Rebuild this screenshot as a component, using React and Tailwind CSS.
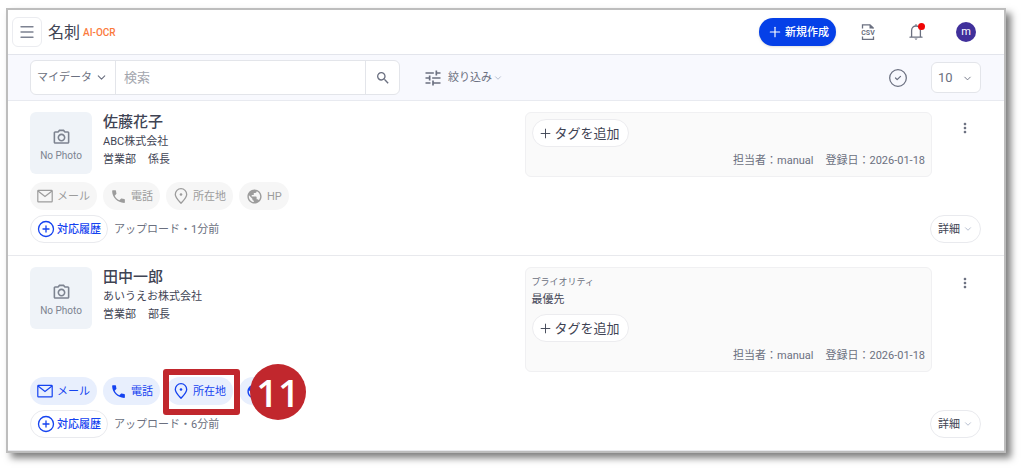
import React from "react";
import { ChevronDown, CircleCheck, CirclePlus, Menu, Plus } from "lucide-react";
import { MdMoreVert, MdOutlinePhotoCamera, MdPhone, MdPublic, MdSearch, MdTune } from "react-icons/md";

const cards = [
   {
      id: 1,
      name: "佐藤花子",
      company: "ABC株式会社",
      department: "営業部",
      title: "係長",
      uploaded: "アップロード・1分前",
      owner: "manual",
      registered: "2026-01-18",
      active: false,
   },
   {
      id: 2,
      name: "田中一郎",
      company: "あいうえお株式会社",
      department: "営業部",
      title: "部長",
      priority: "最優先",
      uploaded: "アップロード・6分前",
      owner: "manual",
      registered: "2026-01-18",
      active: true,
      step: 11,
   },
];

function MailIcon() {
   return (
      <svg viewBox="0 0 16 16" className="w-4 h-4" fill="none" stroke="currentColor" strokeWidth="1.2">
         <rect x="0.8" y="2.4" width="14.4" height="11.4" rx="0.6" />
         <path d="M1 3l7 5.4L15 3" />
      </svg>
   );
}

function PinIcon() {
   return (
      <svg viewBox="0 0 16 16" className="w-4 h-4" fill="none" stroke="currentColor" strokeWidth="1.3">
         <path d="M8 15.200C5 11.900 2.300 9.300 2.300 6.400a5.700 5.700 0 0 1 11.400 0C13.700 9.300 11 11.900 8 15.200z" />
         <circle cx="8" cy="6.500" r="1.300" fill="currentColor" stroke="none" />
      </svg>
   );
}

function CsvIcon() {
   return (
      <svg viewBox="0 0 16 18" className="w-4 h-[18px]" fill="none" stroke="currentColor" strokeWidth="1.3">
         <path d="M2.500 5.500V1.800h7.500L13.500 5.200" />
         <path d="M9.500 1.500v4h4.500z" fill="currentColor" stroke="none" />
         <path d="M2.500 13.500v2.900h11v-2.900" />
         <text
            x="8"
            y="12"
            textAnchor="middle"
            fill="currentColor"
            stroke="none"
            className="text-[7px] font-bold"
         >
            CSV
         </text>
      </svg>
   );
}

function BellIcon() {
   return (
      <svg viewBox="0 0 16 18" className="w-4 h-[18px]" fill="none" stroke="currentColor" strokeWidth="1.3">
         <path d="M2 14.200h12M3.600 14V7.400a4.400 4.400 0 0 1 8.800 0V14M8 1.600V3" strokeLinecap="round" />
         <path d="M6.400 15.600h3.200L8 17z" fill="currentColor" stroke="none" />
      </svg>
   );
}

function Header() {
   return (
      <header className="flex items-center justify-between h-[45px] pl-1 pr-7 border-b border-[#e3e5ec]">
         <div className="flex items-center">
            <button
               aria-label="メニュー"
               className="flex items-center justify-center w-[30px] h-[30px] border border-[#ebecf0] rounded-md text-[#7d8291]"
            >
               <Menu size={18} strokeWidth={1.75} />
            </button>
            <h1 className="ml-1.5 text-[16px] text-[#3f4454]">名刺</h1>
            <span className="ml-[3px] text-[10px] font-medium text-[#fb7a3c]">AI-OCR</span>
         </div>

         <div className="flex items-center gap-8 text-[#6b7080]">
            <div className="flex items-center gap-6">
               <button className="flex items-center gap-0.5 h-7 pl-2 pr-[7px] rounded-full bg-[#0540e8] text-white text-[11px] font-medium shadow-sm">
                  <Plus size={16} strokeWidth={1.75} />
                  新規作成
               </button>
               <button aria-label="CSV出力">
                  <CsvIcon />
               </button>
            </div>
            <button aria-label="お知らせ" className="relative">
               <BellIcon />
               <span className="absolute top-0 -right-px w-[7px] h-[7px] rounded-full bg-[#f00505]" />
            </button>
            <button className="w-5 h-5 rounded-full bg-[#40309b] text-white text-[11px] leading-5">m</button>
         </div>
      </header>
   );
}

function Toolbar() {
   return (
      <div className="flex items-center justify-between h-[46px] pl-[22px] pr-[23px] bg-[#f8f9fe] border-b border-[#e8eaf0] text-[#6b7080]">
         <div className="flex items-center gap-[23px]">
            <div className="flex h-[35px] w-[370px] bg-white border border-[#e3e5ea] rounded-md overflow-hidden">
               <div className="relative w-[85px] border-r border-[#e3e5ea]">
                  <select
                     aria-label="検索対象"
                     className="appearance-none w-full h-full pl-1.5 text-[11px] bg-transparent outline-none"
                  >
                     <option>マイデータ</option>
                  </select>
                  <ChevronDown size={13} className="absolute right-[7px] top-2.5 pointer-events-none" />
               </div>
               <input
                  type="text"
                  aria-label="検索"
                  placeholder="検索"
                  className="flex-1 min-w-0 px-2 text-[13px] placeholder-[#a3a6ae] outline-none"
               />
               <button
                  aria-label="検索する"
                  className="flex items-center justify-center w-[34px] border-l border-[#e3e5ea]"
               >
                  <MdSearch size={16} />
               </button>
            </div>

            <button className="flex items-center text-[11px]">
               <MdTune size={20} />
               <span className="ml-[5px]">絞り込み</span>
               <ChevronDown size={10} className="ml-px text-[#a9b3c6]" />
            </button>
         </div>

         <div className="flex items-center gap-[23px]">
            <button aria-label="すべて選択">
               <CircleCheck size={20} strokeWidth={1.5} />
            </button>
            <div className="relative w-[50px] h-[31px] bg-white border border-[#e3e5ea] rounded-md">
               <select
                  aria-label="表示件数"
                  className="appearance-none w-full h-full pl-1.5 text-[13px] bg-transparent outline-none"
               >
                  <option>10</option>
               </select>
               <ChevronDown size={11} className="absolute right-[7px] top-2.5 pointer-events-none" />
            </div>
         </div>
      </div>
   );
}

function Chip({ icon, label, active, step }) {
   return (
      <div className="relative">
         <button
            className={`flex items-center gap-1 h-7 px-[7px] rounded-full text-[11px] ${
               active ? "bg-[#e8effd] text-[#1543f0]" : "bg-[#f6f6f6] text-[#9c9c9c]"
            }`}
         >
            {icon}
            {label}
         </button>
         {step && (
            <>
               <div className="absolute z-10 -top-2 -left-[3px] -right-[7px] h-[46px] border-6 border-[#c1272d] rounded-[3px]" />
               <div className="absolute z-10 -top-[13px] left-[84px] flex items-center justify-center w-14 h-14 rounded-full bg-[#c1272d] text-white font-['Open_Sans'] font-semibold text-[38px]">
                  {step}
               </div>
            </>
         )}
      </div>
   );
}

function CardItem({ card }) {
   return (
      <article className="flex flex-col gap-[5px] pt-[11px] pb-3 pl-[22px] pr-[23px] border-b border-[#e8e9ed]">
         <div className="flex items-start">
            <div className="flex gap-[11px] w-[52%] shrink-0">
               <div className="flex flex-col items-center justify-center w-[62px] h-[62px] pt-1.5 rounded-md bg-[#eff3f8] text-[#7d8390]">
                  <MdOutlinePhotoCamera size={19} />
                  <span className="text-[10px] leading-[18px]">No Photo</span>
               </div>
               <div className="text-[11px] leading-[18px] text-[#3f4454]">
                  <h2 className="text-[15px] leading-[21px] font-medium">{card.name}</h2>
                  <p>{card.company}</p>
                  <p>
                     {card.department}
                     <span className="ml-3">{card.title}</span>
                  </p>
               </div>
            </div>

            {/* Tags */}
            <section className="flex-1 pt-1.5 pb-[7px] px-1.5 border border-[#f0f0f2] rounded-md bg-[#fafafa]">
               {card.priority && (
                  <dl className="mb-1.5 leading-[17px]">
                     <dt className="text-[9px] text-[#6b7080]">プライオリティ</dt>
                     <dd className="text-[11px] text-[#3f4454]">{card.priority}</dd>
                  </dl>
               )}
               <button className="flex items-center gap-0.5 h-7 pl-[5px] pr-2 rounded-full border border-[#ececef] bg-white text-[13px] text-[#3f4454]">
                  <Plus size={15} strokeWidth={1.5} />
                  タグを追加
               </button>
               <div className="flex justify-end gap-3 mt-1.5 text-[11px] leading-4 text-[#6b7080]">
                  <span>担当者：{card.owner}</span>
                  <span>登録日：{card.registered}</span>
               </div>
            </section>

            <div className="flex justify-end w-[49px] pt-2 pr-2">
               <button aria-label="その他" className="text-[#6b7080]">
                  <MdMoreVert size={16} />
               </button>
            </div>
         </div>

         <div className="flex gap-1.5">
            <Chip icon={<MailIcon />} label="メール" active={card.active} />
            <Chip icon={<MdPhone size={17} />} label="電話" active={card.active} />
            <Chip icon={<PinIcon />} label="所在地" active={card.active} step={card.step} />
            <Chip icon={<MdPublic size={17} />} label="HP" active={card.active} />
         </div>

         <div className="flex items-center justify-between">
            <div className="flex items-center gap-1.5 text-[11px] text-[#6b7080]">
               <button className="flex items-center gap-0.5 h-7 px-1.5 rounded-full border border-[#e9eaee] text-[#1543f0] font-medium">
                  <CirclePlus size={18} strokeWidth={1.75} />
                  対応履歴
               </button>
               <span>{card.uploaded}</span>
            </div>
            <button className="flex items-center justify-center gap-[3px] w-[51px] h-7 rounded-full border border-[#e9eaee] text-[11px] text-[#3f4454]">
               詳細
               <ChevronDown size={10} className="text-[#a9b3c6]" />
            </button>
         </div>
      </article>
   );
}

export default function App() {
   return (
      <div className="pt-2 pl-1.5 pr-[18px] pb-5 bg-white leading-[19px] font-[Roboto,'Noto_Sans_CJK_JP',sans-serif]">
         <main className="border-2 border-[#bdbdbd] bg-white shadow-[5px_5px_7px_rgba(0,0,0,0.5)]">
            <Header />
            <Toolbar />
            {cards.map((card) => (
               <CardItem key={card.id} card={card} />
            ))}
         </main>
      </div>
   );
}
